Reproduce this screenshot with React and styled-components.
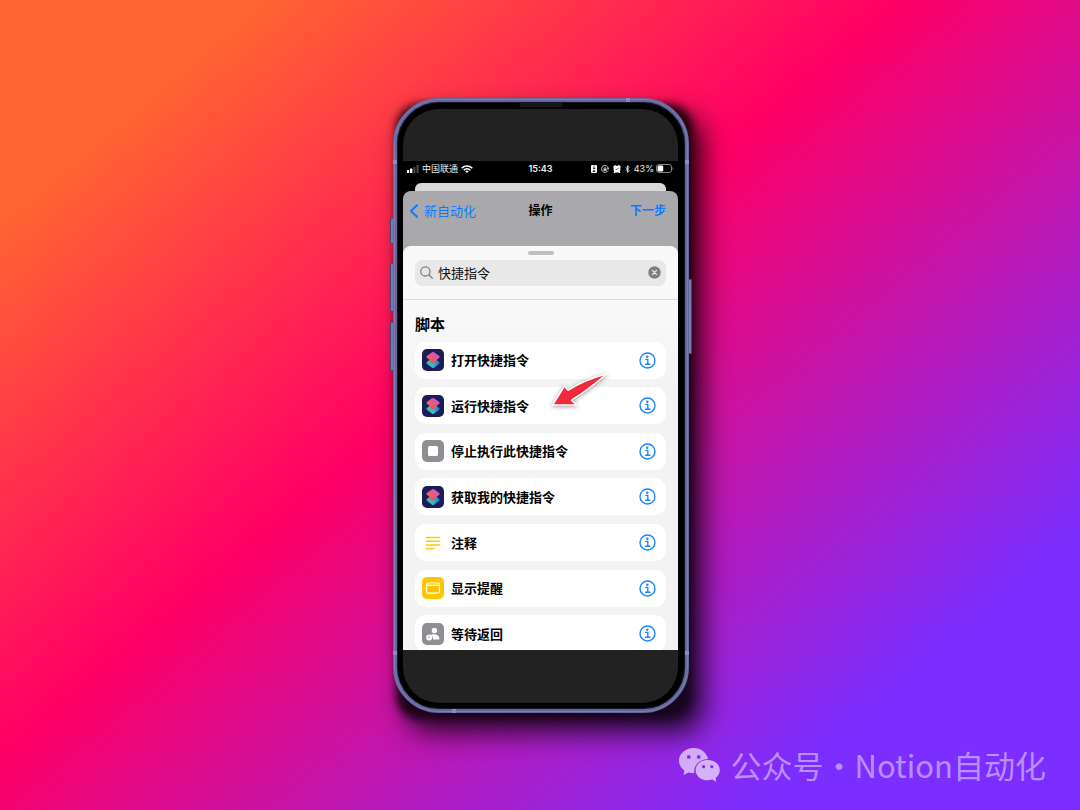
import React from "react";
import styled, { createGlobalStyle } from "styled-components";

const GlobalStyle = createGlobalStyle`
  *, *::before, *::after { box-sizing: border-box; }
  body { margin: 0; }
  button, input { font: inherit; color: inherit; border: 0; padding: 0; margin: 0; background: none; }
  h1, h2, ul { margin: 0; padding: 0; font-weight: inherit; font-size: inherit; }
  svg { display: block; flex: none; }
`;

const Stage = styled.main`
  position: relative;
  display: grid;
  place-items: center;
  min-height: 100vh;
  padding: 24px 22px 24px 24px;
  overflow: hidden;
  background: linear-gradient(140deg, #ff6432 13%, #ff0065 44%, #7b2eff 84%);
  font-family: Inter, "Noto Sans CJK SC", sans-serif;
  color: #000;
`;

const Phone = styled.div`
  position: relative;
  isolation: isolate;
  width: 296px;

  &::before {
    content: "";
    position: absolute;
    z-index: -1;
    inset: 6px -4px -7px 3px;
    border-radius: 24px;
    background: rgba(0, 0, 0, 0.85);
    box-shadow: 10px 12px 26px rgba(0, 0, 0, 0.8);
    filter: blur(4px);
  }
`;

const Frame = styled.div`
  padding: 7px 7px 6px 6px;
  border: 4px solid #64679a;
  border-radius: 46px;
  background: #000;
  box-shadow: inset 0 0 0 1px #15152a;
  outline: 1px solid #7c7fb0;
  outline-offset: -2px;
`;

const SideButton = styled.span`
  position: absolute;
  z-index: -1;
  ${(p) => (p.$right ? "right: -3px;" : "left: -3px;")}
  top: ${(p) => p.$top}px;
  width: 5px;
  height: ${(p) => p.$length}px;
  border: 1px solid #45476f;
  border-radius: 1px;
  background: #787bb0;
`;

const Antenna = styled.span`
  position: absolute;
  width: 4px;
  height: 4px;
  background: #8b8ac6;
  ${(p) => p.$place}
`;

const Speaker = styled.span`
  position: absolute;
  top: 5px;
  left: 50%;
  width: 44px;
  height: 4px;
  margin-left: -22px;
  border-radius: 2px;
  background: #161616;
`;

const Screen = styled.div`
  padding: 52px 0 53px;
  overflow: hidden;
  border-radius: 36px;
  background: #222;
`;

const Viewport = styled.div`
  background: #000;
`;

const StatusBar = styled.div`
  display: grid;
  grid-template-columns: 1fr auto 1fr;
  align-items: center;
  height: 16px;
  padding: 0 4px;
  font-size: 9px;
  line-height: 16px;
  color: #eee;
`;

const StatusGroup = styled.div`
  display: flex;
  align-items: center;
  justify-content: ${(p) => (p.$end ? "flex-end" : "flex-start")};
  gap: ${(p) => (p.$end ? 4 : 3)}px;
`;

const Clock = styled.time`
  font-weight: 600;
`;

const Charge = styled.span`
  display: flex;
  align-items: center;
  gap: 2px;
`;

const BackCard = styled.div`
  height: 8px;
  margin: 6px 12px 0;
  border-radius: 6px 6px 0 0;
  background: #d8d8d8;
`;

const Backdrop = styled.div`
  border-radius: 8px 8px 0 0;
  background: #a9a9ad;
`;

const NavBar = styled.header`
  display: grid;
  grid-template-columns: 1fr auto 1fr;
  align-items: center;
  height: 55px;
  padding: 0 6px 15px;
  font-size: 13px;
  line-height: 20px;
`;

const NavTitle = styled.h1`
  font-size: 12px;
  font-weight: 600;
`;

const NavButton = styled.button`
  display: flex;
  align-items: center;
  gap: 5px;
  justify-self: ${(p) => (p.$end ? "end" : "start")};
  padding: ${(p) => (p.$end ? "0 6px 0 0" : "0")};
  font-size: ${(p) => (p.$end ? 12 : 13)}px;
  font-weight: ${(p) => (p.$end ? 600 : 400)};
  color: #0a7bff;
`;

const Sheet = styled.section`
  height: 404px;
  overflow: hidden;
  border-radius: 8px 8px 0 0;
  background: linear-gradient(#f9f9f9 60px, #f3f3f4 140px);
`;

const SheetTop = styled.div`
  display: flex;
  flex-direction: column;
  gap: 5px;
  height: 54px;
  padding: 5px 12px 0;
  border-bottom: 1px solid #dcdcdc;
`;

const Grabber = styled.span`
  flex: none;
  align-self: center;
  width: 26px;
  height: 4px;
  border-radius: 2px;
  background: #bfbfbf;
`;

const SearchField = styled.label`
  display: flex;
  align-items: center;
  gap: 5px;
  height: 26px;
  padding: 0 5px;
  border-radius: 7px;
  background: #e8e8e8;
`;

const SearchInput = styled.input`
  flex: 1;
  min-width: 0;
  height: 20px;
  outline: 0;
  font-size: 13px;
  line-height: 20px;
  color: #111;
`;

const GroupTitle = styled.h2`
  padding: 14px 12px 7px;
  font-size: 15px;
  font-weight: 600;
  line-height: 21px;
`;

const ActionList = styled.ul`
  display: flex;
  flex-direction: column;
  justify-content: space-between;
  height: 311px;
  padding: 0 12px;
  list-style: none;
`;

const ActionRow = styled.li`
  position: relative;
  display: flex;
  align-items: center;
  gap: 7px;
  height: 37px;
  padding: 0 10px 0 7px;
  border-radius: 11px;
  background: #fff;
  font-size: 13px;
  font-weight: 600;
  line-height: 20px;
`;

const ActionName = styled.span`
  flex: 1;
`;

const IconTile = styled.span`
  display: grid;
  place-items: center;
  width: 22px;
  height: 22px;
  border-radius: 5px;
  background: ${(p) => p.$fill};
`;

const InfoButton = styled.button`
  color: #1a86ff;
`;

const Pointer = styled.svg`
  position: absolute;
  z-index: 1;
  top: -17px;
  left: 134px;
  filter: drop-shadow(0 1px 2px rgba(0, 0, 0, 0.4));
`;

const Watermark = styled.footer`
  position: absolute;
  right: 34px;
  bottom: 22px;
  display: flex;
  align-items: center;
  gap: 9px;
  font-family: "Noto Sans CJK SC", sans-serif;
  font-size: 31px;
  line-height: 46px;
  color: rgba(255, 255, 255, 0.48);
`;

const Account = styled.span`
  display: flex;
`;

const SignalIcon = () => (
  <svg width="12" height="8" viewBox="0 0 12 8" fill="#fff" aria-hidden="true">
    <rect x="0" y="5" width="2.200" height="3" rx=".5" />
    <rect x="3" y="3.500" width="2.400" height="4.500" rx=".5" />
    <rect x="6.400" y="2" width="2" height="6" rx=".5" opacity=".3" />
    <rect x="9.600" y="0" width="2" height="8" rx=".5" opacity=".3" />
  </svg>
);

const WifiIcon = () => (
  <svg width="12" height="8" viewBox="0 0 12 8" fill="none" stroke="#fff" strokeWidth="1.600" aria-hidden="true">
    <path d="M.7 3.200C3.600.2 8.400.2 11.300 3.200M2.700 5.200c1.900-1.900 4.700-1.900 6.600 0" />
    <path d="M4.200 6.300c1-1 2.600-1 3.600 0L6 8Z" fill="#fff" stroke="none" />
  </svg>
);

const CardIcon = () => (
  <svg width="6" height="8" viewBox="0 0 6 8" aria-hidden="true">
    <rect width="6" height="8" rx="1" fill="#fff" />
    <circle cx="3" cy="3.200" r="1" fill="#222" />
    <path d="M1.600 7c0-2.400 2.800-2.400 2.800 0Z" fill="#222" />
    <path d="M2 1h2" stroke="#222" strokeWidth=".6" />
  </svg>
);

const LockIcon = () => (
  <svg width="8" height="8" viewBox="0 0 8 8" fill="none" stroke="#ddd" strokeWidth=".9" aria-hidden="true">
    <path d="M6.900 5.600A3.400 3.400 0 1 1 7.300 3.400M8 3l-.8 1.300L6 3.400" />
    <rect x="2.500" y="3.600" width="3" height="2.200" fill="#ddd" stroke="none" />
    <path d="M3.200 3.800v-.6c0-1.100 1.600-1.100 1.600 0v.6" strokeWidth=".6" />
  </svg>
);

const AlarmIcon = () => (
  <svg width="8" height="8" viewBox="0 0 8 8" aria-hidden="true">
    <circle cx="4" cy="4.200" r="3.400" fill="#fff" />
    <path d="M.9 1.900 2.200.8M7.100 1.900 5.800.8M1.500 7.400l.8-.9M6.500 7.400l-.8-.9" stroke="#fff" strokeWidth="1.400" strokeLinecap="round" />
    <path d="M4 4.400 5.600 2.800M4 4.400H2.600" stroke="#111" strokeWidth=".7" />
  </svg>
);

const BluetoothIcon = () => (
  <svg width="5" height="8" viewBox="0 0 5 8" fill="none" stroke="#e6e6e6" strokeWidth=".9" aria-hidden="true">
    <path d="M.5 2.200 4.300 5.600 2.500 7.300V.7l1.800 1.700L.5 5.800" />
  </svg>
);

const BatteryIcon = () => (
  <svg width="18" height="9" viewBox="0 0 18 9" aria-hidden="true">
    <rect x=".5" y=".5" width="15" height="8" rx="2.400" fill="none" stroke="#888" />
    <rect x="1.600" y="1.600" width="5.600" height="5.800" rx="1.200" fill="#fff" />
    <path d="M16.600 3v3c1-.5 1-2.500 0-3Z" fill="#888" />
  </svg>
);

const ChevronIcon = () => (
  <svg width="10" height="14" viewBox="0 0 10 14" fill="none" stroke="currentColor" strokeWidth="2" strokeLinecap="round" strokeLinejoin="round" aria-hidden="true">
    <path d="M8 1.200 2 7l6 5.800" />
  </svg>
);

const SearchIcon = () => (
  <svg width="13" height="13" viewBox="0 0 13 13" fill="none" stroke="#7f7f83" strokeWidth="1.300" strokeLinecap="round" aria-hidden="true">
    <circle cx="5.400" cy="5.400" r="4.600" />
    <path d="m8.800 8.800 3.500 3.500" />
  </svg>
);

const ClearIcon = () => (
  <svg width="13" height="13" viewBox="0 0 13 13" aria-hidden="true">
    <circle cx="6.500" cy="6.500" r="6.200" fill="#7f7f83" />
    <path d="m4.400 4.400 4.200 4.200m0-4.200L4.400 8.600" stroke="#ececec" strokeWidth="1.300" strokeLinecap="round" />
  </svg>
);

const InfoIcon = () => (
  <svg width="17" height="17" viewBox="0 0 17 17" fill="none" stroke="currentColor" aria-hidden="true">
    <circle cx="8.500" cy="8.500" r="7.500" strokeWidth="1.400" />
    <circle cx="8.300" cy="4.800" r="1.200" fill="currentColor" stroke="none" />
    <path d="M6.800 7.400h2v4.800M6.500 12.300h4.500" strokeWidth="1.400" strokeLinecap="round" strokeLinejoin="round" />
  </svg>
);

const ShortcutsIcon = () => (
  <svg width="22" height="22" viewBox="0 0 22 22" aria-hidden="true">
    <defs>
      <linearGradient id="layerTop" x1="0" y1="1" x2="1" y2="0">
        <stop offset=".1" stopColor="#ff6a4d" />
        <stop offset=".5" stopColor="#e8597f" />
        <stop offset=".9" stopColor="#b95df0" />
      </linearGradient>
      <linearGradient id="layerBase" x1="0" y1="0" x2="1" y2="0">
        <stop offset=".1" stopColor="#3bbfa0" />
        <stop offset=".5" stopColor="#35bdc0" />
        <stop offset="1" stopColor="#1272ff" />
      </linearGradient>
    </defs>
    <path d="M10.100 9a1.700 1.700 0 0 1 1.900 0l5 3.800c.8.600.8 1.500 0 2.100l-5 3.800a1.700 1.700 0 0 1-1.900 0l-5-3.800c-.8-.6-.8-1.500 0-2.100Z" fill="url(#layerBase)" />
    <path d="M10.100 3.300a1.700 1.700 0 0 1 1.900 0l5 3.500c.8.600.8 1.500 0 2.100l-5 3.500a1.700 1.700 0 0 1-1.900 0l-5-3.500c-.8-.6-.8-1.500 0-2.100Z" fill="url(#layerTop)" />
    <path d="m11.500 8.700 3.800 2.300-3.800 3.400c-.5.400-1.100.3-1.500 0l-2.600-2.100Z" fill="#e5586c" />
  </svg>
);

const StopIcon = () => (
  <svg width="22" height="22" viewBox="0 0 22 22" aria-hidden="true">
    <rect x="6" y="6" width="10" height="10" rx="1.500" fill="#fff" />
  </svg>
);

const CommentIcon = () => (
  <svg width="22" height="22" viewBox="0 0 22 22" stroke="#fccb16" strokeWidth="1.500" strokeLinecap="round" aria-hidden="true">
    <path d="M4.300 5.500h13.500M4.300 9.300h13.500M4.300 13.100h13.500M4.300 16.800h7.500" />
  </svg>
);

const AlertIcon = () => (
  <svg width="22" height="22" viewBox="0 0 22 22" fill="none" stroke="#fff" aria-hidden="true">
    <rect x="4.500" y="6" width="13" height="10.200" rx="1.800" strokeWidth="1.200" />
    <path d="M5 8.300h12" strokeWidth="1.200" />
    <path d="M5.500 7.200h4" stroke="#ffe9a0" strokeWidth=".8" strokeDasharray="1 .6" />
  </svg>
);

const WaitIcon = () => (
  <svg width="22" height="22" viewBox="0 0 22 22" fill="#fff" aria-hidden="true">
    <circle cx="12.400" cy="7.500" r="2.700" />
    <path d="M8.400 11.900c2.500-1.400 8.900-1 9 3.600 0 .6-.3.900-.9.900h-5.300c.2-2.100-.9-3.800-2.800-4.500Z" />
    <circle cx="7.200" cy="14.600" r="3" />
    <path d="M7.200 12.900v1.800H5.900" fill="none" stroke="#8e8e93" strokeWidth=".7" />
  </svg>
);

const WeChatIcon = () => (
  <svg width="42" height="34" viewBox="0 0 42 34" aria-hidden="true">
    <path
      fill="#fff"
      fillOpacity=".62"
      fillRule="evenodd"
      d="M14.700 0C6.600 0 0 5.600 0 12.700c0 4 2.100 7.400 5.400 9.800L4.500 27l5-2.500c1.900.5 3.700.8 5.700.8C14.400 17.200 20.500 11 29 10.900 27.700 4.600 21.700 0 14.700 0ZM9.800 7a1.900 1.900 0 1 1 0 3.800 1.900 1.900 0 0 1 0-3.800Zm9.900 0a1.900 1.900 0 1 1 0 3.800 1.900 1.900 0 0 1 0-3.800Z"
    />
    <path
      fill="#fff"
      fillOpacity=".64"
      fillRule="evenodd"
      d="M28.700 12C22 12 16.600 16.500 16.600 22.200S22 32.300 28.700 32.300c1.600 0 3.100-.2 4.500-.7l4.200 2.200-.9-3.800c2.700-2 4.300-4.600 4.300-7.800C40.800 16.500 35.400 12 28.700 12Zm-4.100 5.100a1.600 1.600 0 1 1 0 3.200 1.600 1.600 0 0 1 0-3.200Zm8.200 0a1.600 1.600 0 1 1 0 3.200 1.600 1.600 0 0 1 0-3.200Z"
    />
  </svg>
);

const PointerArrow = () => (
  <Pointer width="62" height="40" viewBox="0 0 62 40" aria-hidden="true">
    <path d="M57.500 4C44 7.500 32 12 19 20.300L15.500 16 3.500 35h24l-5-4.800C34 23 46 14 57.500 4Z" fill="#f2283c" stroke="#fff" strokeWidth="1.500" strokeLinejoin="round" />
  </Pointer>
);

const actions = [
  { name: "打开快捷指令", fill: "#1c1c58", Icon: ShortcutsIcon },
  { name: "运行快捷指令", fill: "#1c1c58", Icon: ShortcutsIcon, marked: true },
  { name: "停止执行此快捷指令", fill: "#8e8e93", Icon: StopIcon },
  { name: "获取我的快捷指令", fill: "#1c1c58", Icon: ShortcutsIcon },
  { name: "注释", fill: "#fff", Icon: CommentIcon },
  { name: "显示提醒", fill: "#ffc400", Icon: AlertIcon },
  { name: "等待返回", fill: "#8e8e93", Icon: WaitIcon },
];

export default function App() {
  return (
    <Stage>
      <GlobalStyle />
      <Phone>
        <SideButton $top={120} $length={26} />
        <SideButton $top={165} $length={49} />
        <SideButton $top={224} $length={49} />
        <SideButton $right $top={181} $length={75} />
        <Frame>
          <Screen>
            <Viewport>
              <StatusBar>
                <StatusGroup>
                  <SignalIcon />
                  <span>中国联通</span>
                  <WifiIcon />
                </StatusGroup>
                <Clock>15:43</Clock>
                <StatusGroup $end>
                  <CardIcon />
                  <LockIcon />
                  <AlarmIcon />
                  <BluetoothIcon />
                  <Charge>
                    43%
                    <BatteryIcon />
                  </Charge>
                </StatusGroup>
              </StatusBar>
              <BackCard />
              <Backdrop>
                <NavBar>
                  <NavButton type="button">
                    <ChevronIcon />
                    新自动化
                  </NavButton>
                  <NavTitle>操作</NavTitle>
                  <NavButton type="button" $end>
                    下一步
                  </NavButton>
                </NavBar>
                <Sheet>
                  <SheetTop>
                    <Grabber />
                    <SearchField>
                      <SearchIcon />
                      <SearchInput type="text" aria-label="搜索" defaultValue="快捷指令" />
                      <button type="button" aria-label="清除">
                        <ClearIcon />
                      </button>
                    </SearchField>
                  </SheetTop>
                  <GroupTitle>脚本</GroupTitle>
                  <ActionList>
                    {actions.map(({ name, fill, Icon, marked }) => (
                      <ActionRow key={name}>
                        <IconTile $fill={fill}>
                          <Icon />
                        </IconTile>
                        <ActionName>{name}</ActionName>
                        <InfoButton type="button" aria-label={name}>
                          <InfoIcon />
                        </InfoButton>
                        {marked && <PointerArrow />}
                      </ActionRow>
                    ))}
                  </ActionList>
                </Sheet>
              </Backdrop>
            </Viewport>
          </Screen>
        </Frame>
        <Speaker />
        <Antenna $place="top: 0; right: 59px;" />
        <Antenna $place="top: 62px; left: 0;" />
        <Antenna $place="top: 62px; right: 0;" />
        <Antenna $place="bottom: 58px; left: 0;" />
        <Antenna $place="bottom: 58px; right: 0;" />
        <Antenna $place="bottom: 0; left: 59px;" />
      </Phone>
      <Watermark>
        <WeChatIcon />
        <Account>
          <span>公众号</span>
          <span>·</span>
          <span>Notion自动化</span>
        </Account>
      </Watermark>
    </Stage>
  );
}
